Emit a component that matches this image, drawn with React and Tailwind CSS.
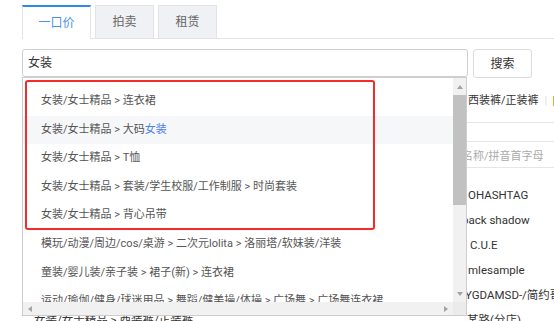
import React from 'react';

const font = 'font-["Roboto","Noto_Sans_CJK_SC",sans-serif]';

const rows = [
    { text: '女装/女士精品 > 连衣裙' },
    { text: '女装/女士精品 > 大码', hit: '女装', active: true },
    { text: '女装/女士精品 > T恤' },
    { text: '女装/女士精品 > 套装/学生校服/工作制服 > 时尚套装' },
    { text: '女装/女士精品 > 背心吊带' },
    { text: '模玩/动漫/周边/cos/桌游 > 二次元lolita > 洛丽塔/软妹装/洋装' },
    { text: '童装/婴儿装/亲子装 > 裙子(新) > 连衣裙' },
    { text: '运动/瑜伽/健身/球迷用品 > 舞蹈/健美操/体操 > 广场舞 > 广场舞连衣裙' },
];

const Arrow = ({ dir }) => {
    const pts = {
        up: '0,4 3,0 6,4',
        down: '0,0 6,0 3,4',
        left: '4,0 4,6 0,3',
        right: '0,0 0,6 4,3',
    }[dir];
    const w = dir === 'up' || dir === 'down' ? 6 : 4;
    const h = dir === 'up' || dir === 'down' ? 4 : 6;
    return (
        <svg width={w} height={h} viewBox={`0 0 ${w} ${h}`}>
            <polygon points={pts} fill="#a3a3a3" />
        </svg>
    );
};

const Tab = ({ label, active }) => (
    <div
        className={
            active
                ? 'w-[69px] h-[34px] -mb-px bg-white border-t-2 border-t-[#2b8be6] border-x border-x-[#e4e4e4] flex items-center justify-center text-[12px] text-[#4a93e8]'
                : 'w-[59px] h-[33px] ml-[4px] bg-[#f0f1f5] border border-[#e2e3e7] border-b-0 flex items-center justify-center text-[12px] text-[#666]'
        }
    >
        {label}
    </div>
);

const App = () => {
    return (
        <div className={`relative w-[554px] h-[321px] overflow-hidden bg-white ${font}`}>
            {/* tabs */}
            <div className="pt-[5px] pl-[22px]">
                <div className="flex items-end border-b border-[#e4e4e4]">
                    <Tab label="一口价" active />
                    <Tab label="拍卖" />
                    <Tab label="租赁" />
                </div>
            </div>

            {/* search row */}
            <div className="flex items-start mt-[10px] pl-[22px]">
                <div className="w-[446px] h-[28px] border border-[#cfcfcf] rounded-[3px] flex items-center pl-[5px] text-[12px] text-[#333]">
                    女装
                </div>
                <button className="ml-[5px] w-[59px] h-[29px] border border-[#dcdcdc] rounded-[3px] bg-white text-[12px] text-[#333]">
                    搜索
                </button>
            </div>

            {/* page content behind the dropdown */}
            <div className="text-[11px] text-[#333]">
                <div className="mt-[12px] h-[22px] flex items-center pl-[468px] whitespace-nowrap">
                    <span>西装裤/正装裤</span>
                    <span className="ml-[6px] text-[#ddd]">|</span>
                    <span className="ml-[6px] w-[2px] h-[10px] bg-[#f5a623]" />
                </div>
                <div className="mt-[10px] ml-[440px] border-t border-[#e6e6e6]" />
                <div className="mt-[18px] ml-[440px] h-[27px] border-y border-[#e6e6e6] flex items-center pt-[5px] pl-[22px] text-[#aaa] whitespace-nowrap">
                    名称/拼音首字母
                </div>
                <div className="mt-[15px] text-[11.5px]">
                    <div className="h-[25px] flex items-center pl-[468px] whitespace-nowrap">OHASHTAG</div>
                    <div className="h-[25px] flex items-center pl-[462px] whitespace-nowrap">back shadow</div>
                    <div className="h-[25px] flex items-center pl-[470px] whitespace-nowrap">C.U.E</div>
                    <div className="h-[25px] flex items-center pl-[468px] whitespace-nowrap">mlesample</div>
                    <div className="h-[25px] flex items-center pl-[465px] whitespace-nowrap">YGDAMSD-/简约哥弟</div>
                    <div className="h-[25px] flex items-center whitespace-nowrap">
                        <span className="pl-[34px] w-[465px] text-[#333]">女装/女士精品 &gt; 西装裤/正装裤</span>
                        <span className="pl-[2px]">某路(分店)</span>
                    </div>
                </div>
            </div>

            {/* dropdown */}
            <div className="absolute left-[22px] top-[77px] w-[445px] h-[239px] border border-[#cdcdcd] bg-white z-10 flex flex-col">
                <div className="flex flex-1 min-h-0">
                    <div className="flex-1 overflow-hidden pt-[9px] text-[11px] text-[#555]">
                        {rows.map((r, i) => (
                            <div
                                key={i}
                                className={`h-[28.6px] flex items-center pl-[18px] whitespace-nowrap ${r.active ? 'bg-[#f6f7f9]' : ''}`}
                            >
                                {r.text}
                                {r.hit && <span className="text-[#4e80f0]">{r.hit}</span>}
                            </div>
                        ))}
                    </div>
                    <div className="w-[13px] bg-[#f1f1f1] flex flex-col">
                        <div className="h-[17px] flex items-center justify-center">
                            <Arrow dir="up" />
                        </div>
                        <div className="h-[110px] bg-[#c1c1c1]" />
                        <div className="flex-1" />
                        <div className="h-[16px] flex items-center justify-center">
                            <Arrow dir="down" />
                        </div>
                    </div>
                </div>
                <div className="h-[13px] flex bg-[#f1f1f1]">
                    <div className="w-[14px] flex items-center justify-center">
                        <Arrow dir="left" />
                    </div>
                    <div className="flex-1" />
                    <div className="w-[14px] flex items-center justify-center">
                        <Arrow dir="right" />
                    </div>
                    <div className="w-[13px] bg-[#ebebeb]" />
                </div>
            </div>

            {/* annotation */}
            <div className="absolute left-[25px] top-[80px] w-[350px] h-[150px] border-2 border-[#f52b2b] rounded-[3px] z-20" />
        </div>
    );
};

export default App;
